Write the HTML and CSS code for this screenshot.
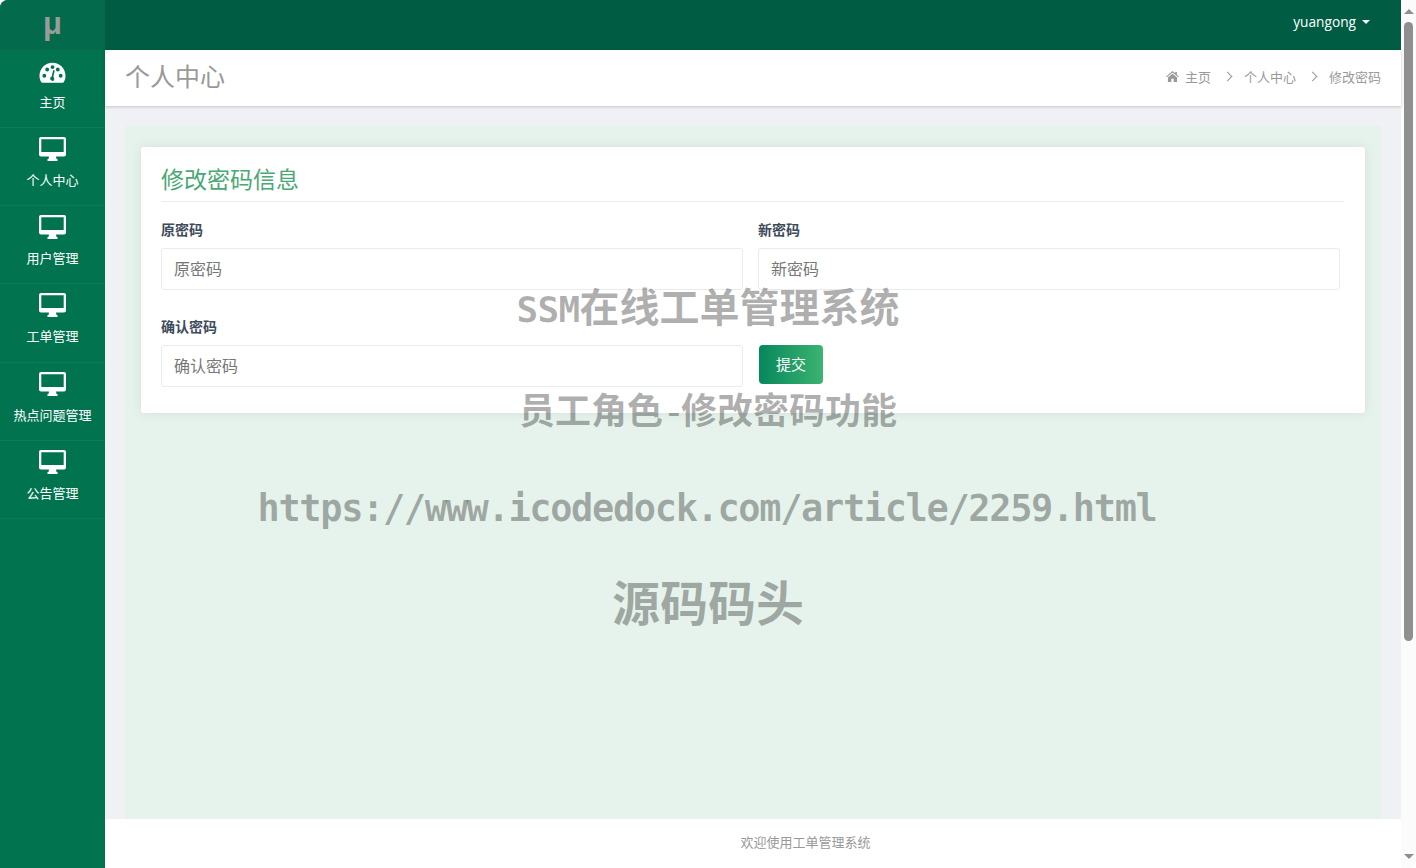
FILE: index.html
```html
<!DOCTYPE html>
<html lang="en">
<head>
    <meta charset="utf-8">
    <meta name="viewport" content="width=device-width, initial-scale=1.0">
    <link rel="stylesheet" href="styles.css">
    <title>修改密码</title>
</head>

<body>
    <svg class="icon-defs" width="0" height="0">
        <symbol id="desktop" viewBox="0 0 27 24">
            <path fill-rule="evenodd" d="M2 0h23a2 2 0 0 1 2 2v15.500a2 2 0 0 1-2 2H17l.5 2.500H18.500v2h-10v-2h1l.5-2.500H2a2 2 0 0 1-2-2V2a2 2 0 0 1 2-2zM2.300 2.300v12.700h22.400V2.300z"/>
        </symbol>
    </svg>

    <aside class="sidebar">
        <div class="logo">μ</div>
        <a class="nav-item">
            <svg class="nav-icon" viewBox="0 0 28 22" preserveAspectRatio="xMidYMax meet">
                <path fill-rule="evenodd" d="M14 1C6.500 1 .5 7 .5 14.500c0 2.500.7 4.800 1.900 6.700.2.300.5.500.9.500h21.400c.4 0 .7-.2.900-.5 1.200-1.900 1.900-4.200 1.900-6.700C27.500 7 21.500 1 14 1zM5.500 16.500a2 2 0 1 1 0-4 2 2 0 0 1 0 4zm3-6.500a2 2 0 1 1 0-4 2 2 0 0 1 0 4zm5.500-2.500a2 2 0 1 1 0-4 2 2 0 0 1 0 4zm2.300 10.800a2.500 2.500 0 0 1-4.800-.9c.1-1 .8-1.800 1.700-2.100l1.300-6.100c.1-.5.600-.8 1-.7.500.1.800.6.700 1.100l-1.300 6c.8.700 1 1.800.4 2.700zm3.200-8.300a2 2 0 1 1 0-4 2 2 0 0 1 0 4zm3 6.500a2 2 0 1 1 0-4 2 2 0 0 1 0 4z"/>
            </svg>
            <span>主页</span>
        </a>
        <a class="nav-item"><svg class="nav-icon"><use href="#desktop"/></svg><span>个人中心</span></a>
        <a class="nav-item"><svg class="nav-icon"><use href="#desktop"/></svg><span>用户管理</span></a>
        <a class="nav-item"><svg class="nav-icon"><use href="#desktop"/></svg><span>工单管理</span></a>
        <a class="nav-item"><svg class="nav-icon"><use href="#desktop"/></svg><span>热点问题管理</span></a>
        <a class="nav-item"><svg class="nav-icon"><use href="#desktop"/></svg><span>公告管理</span></a>
    </aside>

    <div class="main">
        <header class="topbar">
            <span class="user">yuangong</span>
            <span class="caret"></span>
        </header>

        <div class="page-title">
            <h1>个人中心</h1>
            <div class="breadcrumb">
                <svg class="home-icon" viewBox="0 0 14 12">
                    <path d="M7 0 0 6l.7.8L7 1.500l6.300 5.300.7-.8-2.200-1.900V1h-1.800v1.500zM2 7.200V12h3.700V8.500h2.600V12H12V7.200L7 3z"/>
                </svg>
                <span>主页</span>
                <span class="sep"></span>
                <span>个人中心</span>
                <span class="sep"></span>
                <span>修改密码</span>
            </div>
        </div>

        <div class="content">
            <div class="panel">
                <div class="card">
                    <h2>修改密码信息</h2>
                    <form class="pwd-form">
                        <div class="field">
                            <label for="oldPwd">原密码</label>
                            <input type="text" id="oldPwd" placeholder="原密码">
                        </div>
                        <div class="field">
                            <label for="newPwd">新密码</label>
                            <input type="text" id="newPwd" placeholder="新密码">
                        </div>
                        <div class="field">
                            <label for="confirmPwd">确认密码</label>
                            <input type="text" id="confirmPwd" placeholder="确认密码">
                        </div>
                        <div class="field field-btn">
                            <button type="button">提交</button>
                        </div>
                    </form>
                </div>
            </div>
        </div>

        <footer class="footer">欢迎使用工单管理系统</footer>
    </div>

    <div class="scrollbar">
        <span class="arrow-up"></span>
        <div class="track"><div class="thumb"></div></div>
        <span class="arrow-down"></span>
    </div>

    <div class="wm wm-1"><span class="wm-latin">SSM</span>在线工单管理系统</div>
    <div class="wm wm-2">员工角色<span class="wm-dash">-</span>修改密码功能</div>
    <div class="wm wm-3 wm-latin">https://www.icodedock.com/article/2259.html</div>
    <div class="wm wm-4">源码码头</div>
</body>

</html>
```

FILE: styles.css
```css
* {
    box-sizing: border-box;
}

html,
body {
    height: 100%;
}

body {
    display: flex;
    height: 868px;
    margin: 0;
    overflow: hidden;
    background-color: #fff;
    font-family: "Open Sans", "Noto Sans CJK SC", sans-serif;
    font-size: 13px;
    color: #333;
}

.icon-defs {
    position: absolute;
}

/* sidebar */
.sidebar {
    flex: 0 0 105px;
    background-color: #02734f;
    border-top-left-radius: 8px;
    overflow: hidden;
}

.logo {
    height: 50px;
    padding-top: 5px;
    background-color: #036b4b;
    color: #989c9a;
    font-family: "Liberation Sans", sans-serif;
    font-size: 31px;
    font-weight: bold;
    line-height: 38px;
    text-align: center;
}

.nav-item {
    display: flex;
    flex-direction: column;
    align-items: center;
    height: 78.130px;
    padding-top: 9px;
    border-bottom: 1px solid #0a7d58;
    color: #fff;
}

.nav-icon {
    width: 27px;
    height: 24px;
    fill: #fff;
}

.nav-item span {
    margin-top: 9px;
    line-height: 20px;
}

/* main column */
.main {
    flex: 1;
    display: flex;
    flex-direction: column;
    min-width: 0;
}

.topbar {
    display: flex;
    align-items: center;
    justify-content: flex-end;
    flex: 0 0 50px;
    padding: 0 31px 7px 0;
    background-color: #005c42;
    color: #fff;
}

.user {
    font-size: 13.700px;
}

.caret {
    margin-left: 6px;
    border-top: 4px solid #fff;
    border-left: 4px solid transparent;
    border-right: 4px solid transparent;
}

.page-title {
    position: relative;
    display: flex;
    align-items: center;
    justify-content: space-between;
    flex: 0 0 56px;
    padding: 0 20px 4px 20px;
    background-color: #fff;
    box-shadow: 0 1px 3px rgba(0, 0, 0, .18);
}

h1 {
    margin: 0 0 2px;
    color: #999;
    font-size: 25px;
    font-weight: 400;
}

.breadcrumb {
    display: flex;
    align-items: center;
    color: #999;
    font-size: 13px;
}

.home-icon {
    width: 13px;
    height: 11px;
    margin-right: 6px;
    fill: #999;
}

.sep {
    display: flex;
    align-items: center;
    justify-content: center;
    width: 33px;
    height: 10px;
}

.sep::before {
    content: "";
    width: 6px;
    height: 6px;
    border-top: 1px solid #999;
    border-right: 1px solid #999;
    transform: rotate(45deg);
}

.content {
    flex: 1;
    display: flex;
    min-height: 0;
    padding: 20px 20px 0;
    background-color: #eff1f5;
}

.panel {
    flex: 1;
    padding: 21px 16px;
    background-color: #e6f3ec;
}

.card {
    height: 266px;
    padding: 14px 21px 14px 20px;
    background-color: #fff;
    border-radius: 3px;
    box-shadow: 0 0 12px rgba(0, 0, 0, .08);
}

h2 {
    height: 41px;
    margin: 0 0 18px;
    border-bottom: 1px solid #e9ecef;
    color: #4aa876;
    font-size: 23px;
    font-weight: 400;
    line-height: 36px;
}

.pwd-form {
    display: grid;
    grid-template-columns: 582px 582px;
    column-gap: 15px;
    row-gap: 27px;
}

.field label {
    display: block;
    height: 19px;
    margin-bottom: 9px;
    color: #3e4b5b;
    font-size: 14px;
    font-weight: bold;
    line-height: 19px;
}

.field input {
    display: block;
    width: 100%;
    height: 42px;
    padding: 0 12px;
    border: 1px solid #e9ecef;
    border-radius: 3px;
    background-color: #fff;
    font-family: inherit;
    font-size: 16px;
}

.field input::placeholder {
    color: #777;
}

.field-btn {
    display: flex;
    align-items: flex-start;
    padding: 28px 0 0 1px;
}

button {
    width: 64px;
    height: 39px;
    padding: 0 0 2px;
    border: none;
    border-radius: 4px;
    background: linear-gradient(to right, #06875c, #3cb371);
    color: #fff;
    font-family: inherit;
    font-size: 15px;
    cursor: pointer;
}

.footer {
    flex: 0 0 49px;
    padding-left: 105px;
    background-color: #fff;
    color: #999;
    line-height: 47px;
    text-align: center;
}

/* scrollbar */
.scrollbar {
    display: flex;
    flex-direction: column;
    align-items: center;
    flex: 0 0 15px;
    padding: 9px 0 9px;
    background-color: #fbfbfb;
    border-bottom-right-radius: 8px;
}

.arrow-up {
    border-bottom: 5px solid #8f8f8f;
    border-left: 5px solid transparent;
    border-right: 5px solid transparent;
}

.arrow-down {
    border-top: 5px solid #8f8f8f;
    border-left: 5px solid transparent;
    border-right: 5px solid transparent;
}

.track {
    flex: 1;
    width: 100%;
    padding: 8px 3px 0;
}

.thumb {
    height: 619px;
    border-radius: 5px;
    background-color: #8f8f8f;
}

/* watermark text over the page */
.wm {
    position: absolute;
    left: 0;
    width: 1416px;
    color: rgba(0, 0, 0, .31);
    font-family: "Noto Sans CJK SC", sans-serif;
    font-weight: bold;
    text-align: center;
    white-space: nowrap;
}

.wm-latin {
    font-family: "DejaVu Sans Mono", "Noto Sans CJK SC", monospace;
}

.wm-1 {
    top: 281px;
    font-size: 40px;
    line-height: 48px;
}

.wm-1 .wm-latin {
    font-size: 36px;
    letter-spacing: -.700px;
}

.wm-2 {
    top: 386px;
    font-size: 36px;
    line-height: 44px;
}

.wm-dash {
    display: inline-block;
    width: 18px;
    font-family: "Liberation Mono", monospace;
    font-weight: 400;
}

.wm-3 {
    top: 485px;
    left: -1px;
    font-size: 37px;
    letter-spacing: -1.370px;
    line-height: 48px;
}

.wm-4 {
    top: 571px;
    font-size: 48px;
    line-height: 58px;
}
```
